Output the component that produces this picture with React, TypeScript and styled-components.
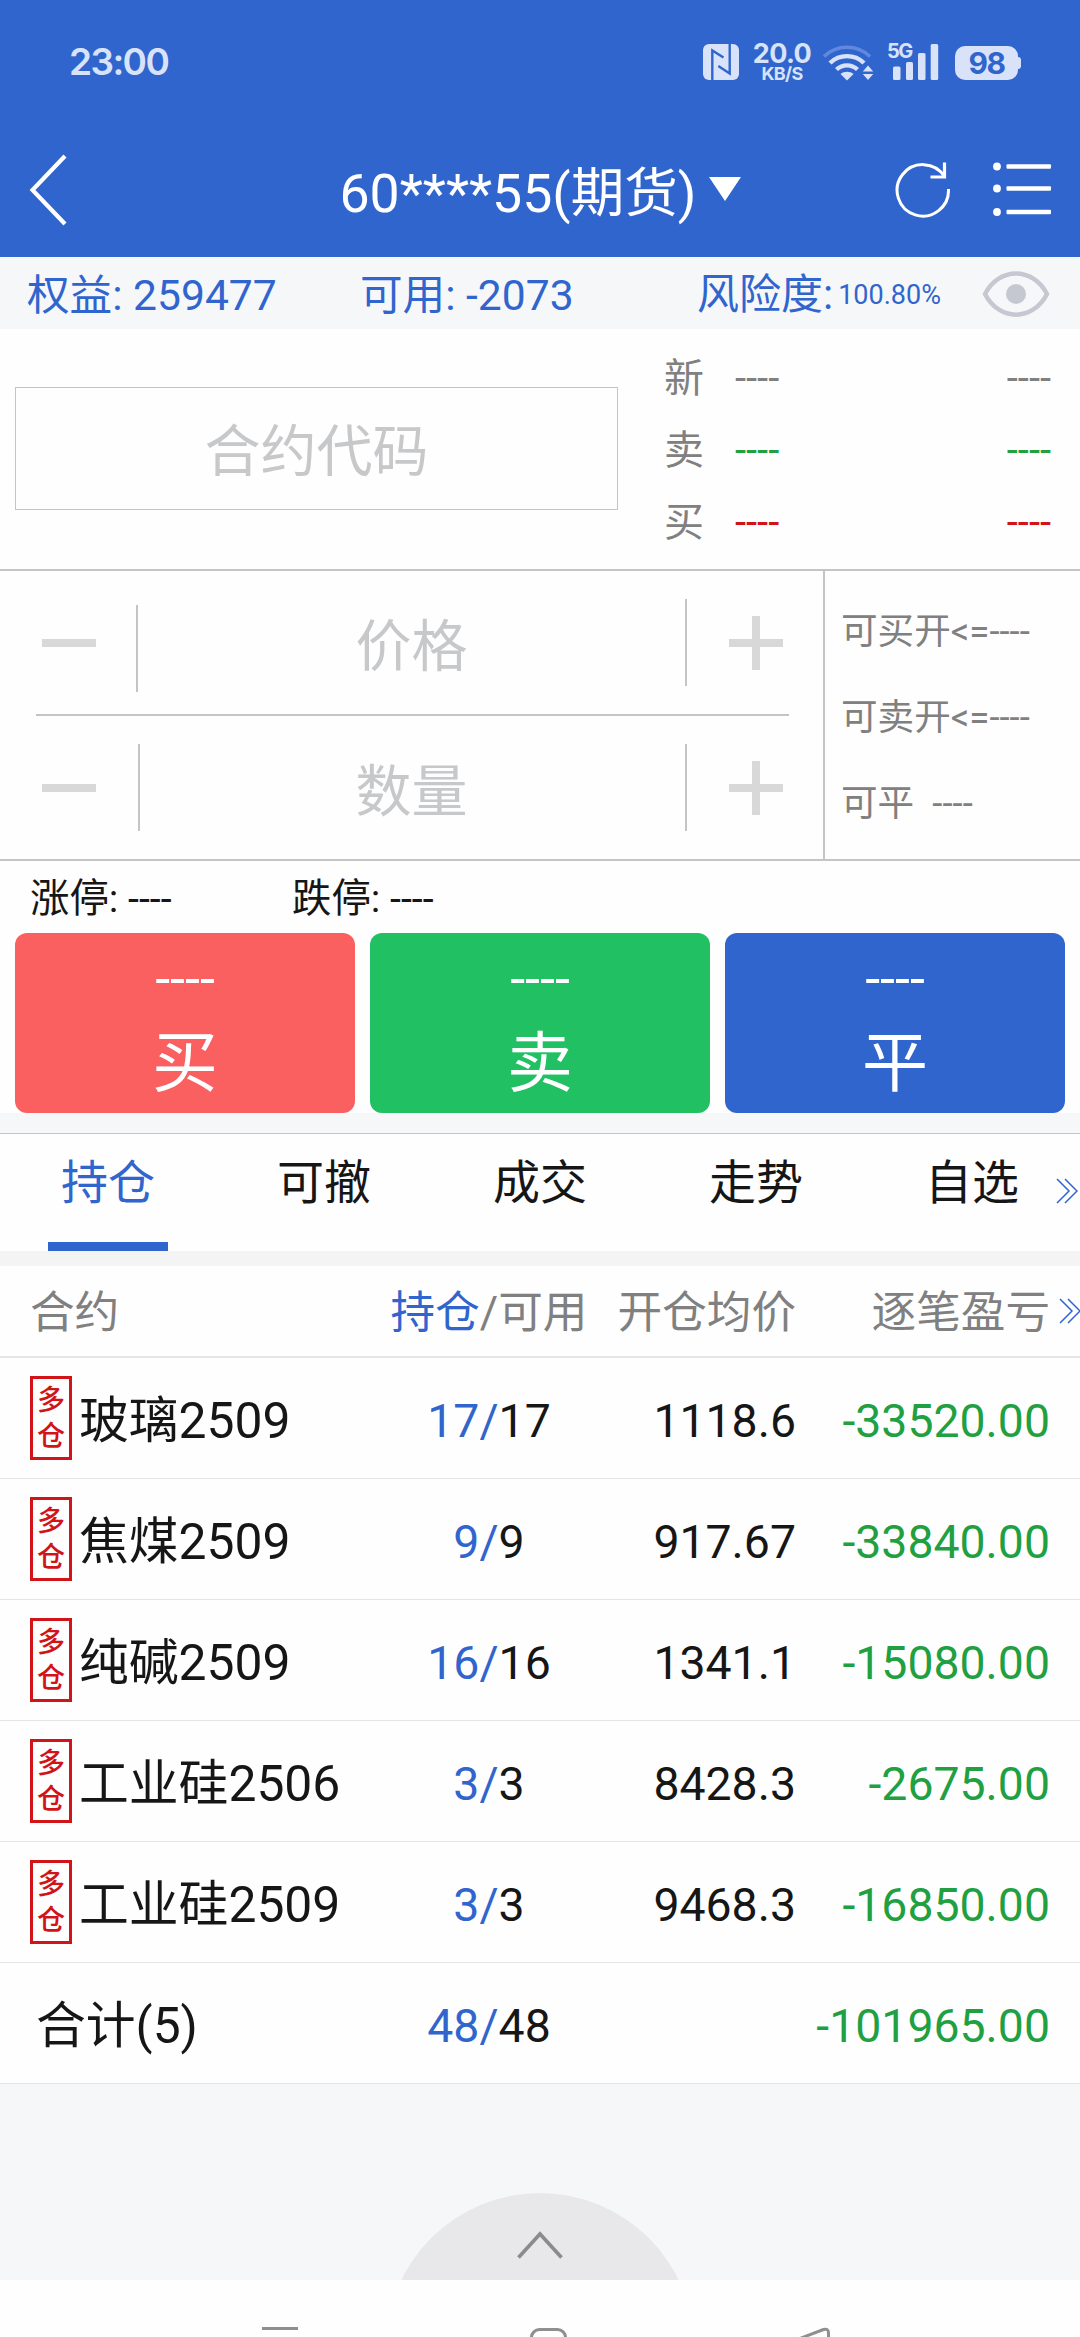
import React from 'react';
import styled, { createGlobalStyle } from 'styled-components';

const BLUE = '#3165ce';
const GREEN = '#21a042';
const RED = '#d01418';
const GRAY = '#808080';
const LINE = '#c3c4c6';
const STATUS = '#d8e3f9';

const Global = createGlobalStyle`
  *, *::before, *::after { box-sizing: border-box; }
  body {
    margin: 0;
    background: #fefefe;
    font-family: Roboto, "Noto Sans CJK SC", sans-serif;
    color: #161616;
  }
`;

const Screen = styled.main`
  width: 1080px;
  height: 2337px;
  display: flex;
  flex-direction: column;
  overflow: hidden;
  background: #fefefe;
`;

/* ---------- header ---------- */

const Header = styled.header`
  height: 257px;
  background: ${BLUE};
  flex: none;
`;

const StatusBar = styled.div`
  height: 127px;
  padding: 40px 59px 0 69px;
  display: flex;
  justify-content: space-between;
  align-items: flex-start;
  color: ${STATUS};
  font-family: Inter, sans-serif;
`;

const Clock = styled.span`
  font-size: 37px;
  font-weight: 600;
  line-height: 44px;
  letter-spacing: -1.6px;
`;

const StatusIcons = styled.div`
  display: flex;
  align-items: flex-start;
  padding-top: 3px;
`;

const Speed = styled.div`
  width: 60px;
  height: 44px;
  margin: -3px 10px 0 12px;
  display: flex;
  flex-direction: column;
  align-items: center;
  font-weight: 700;
  letter-spacing: -0.6px;
`;

const SpeedValue = styled.span`
  font-size: 27px;
  line-height: 27px;
`;

const SpeedUnit = styled.span`
  font-size: 18px;
  line-height: 13px;
`;

const Signal = styled.div`
  width: 52px;
  height: 38px;
  margin: 0 16px 0 13px;
  position: relative;
`;

const Generation = styled.span`
  position: absolute;
  left: 0;
  top: 0;
  font-size: 20px;
  font-weight: 700;
  line-height: 17px;
  letter-spacing: -1.6px;
`;

const Battery = styled.div`
  width: 63px;
  height: 34px;
  margin-top: 3px;
  border-radius: 10px;
  background: ${STATUS};
  color: ${BLUE};
  font-size: 30px;
  font-weight: 700;
  line-height: 34px;
  letter-spacing: -1.4px;
  text-align: center;
`;

const BatteryTip = styled.span`
  width: 3px;
  height: 12px;
  margin-top: 14px;
  border-radius: 0 3px 3px 0;
  background: ${STATUS};
`;

const NavBar = styled.div`
  height: 130px;
  display: grid;
  grid-template-columns: 339.5px 1fr 185px 101px;
  align-items: center;
  color: #fff;
`;

const Title = styled.h1`
  margin: 0;
  padding-top: 4px;
  display: flex;
  align-items: center;
  gap: 12px;
  font-size: 53.6px;
  font-weight: 400;
  line-height: 64px;
  white-space: nowrap;
`;

/* ---------- account summary ---------- */

const Account = styled.section`
  height: 72px;
  padding: 3px 0 0 27px;
  display: grid;
  grid-template-columns: 333px 337px 285px 68px;
  align-items: center;
  background: #f6f7f9;
  color: ${BLUE};
  font-size: 42.6px;
  line-height: 60px;
  white-space: nowrap;
`;

const Risk = styled.span`
  display: flex;
  align-items: center;
  gap: 5px;
  font-size: 42px;
`;

const Percent = styled.span`
  font-size: 27px;
`;

/* ---------- quote ---------- */

const Quote = styled.section`
  height: 242px;
  padding: 0 29px 0 15px;
  display: grid;
  grid-template-columns: 603px 1fr;
  column-gap: 46px;
  border-bottom: 2px solid ${LINE};
`;

const CodeBox = styled.div`
  height: 123px;
  margin-top: 58px;
  border: 1.5px solid ${LINE};
  display: flex;
  align-items: center;
  justify-content: center;
  color: #c7c8ca;
  font-size: 56px;
  line-height: 110px;
  padding-top: 6px;
`;

const QuoteRows = styled.div`
  padding-top: 14px;
`;

const QuoteRow = styled.div<{ $color: string }>`
  height: 72px;
  display: grid;
  grid-template-columns: 71px 1fr auto;
  font-size: 40px;
  line-height: 72px;
  color: ${(p) => p.$color};
`;

const QuoteLabel = styled.span`
  color: ${GRAY};
`;

/* ---------- order entry ---------- */

const Entry = styled.section`
  height: 290px;
  display: grid;
  grid-template-columns: 825px 1fr;
  border-bottom: 2px solid ${LINE};
`;

const Steppers = styled.div`
  padding-left: 36px;
  padding-right: 34px;
  border-right: 2px solid ${LINE};
`;

const Stepper = styled.div<{ $left: number }>`
  height: 143px;
  display: grid;
  grid-template-columns: ${(p) => p.$left}px 2px 1fr 2px 102px;
  align-items: center;
`;

const StepperRule = styled.div`
  height: 2px;
  background: ${LINE};
`;

const Divider = styled.span<{ $shift: number }>`
  height: 87px;
  background: ${LINE};
  margin-top: ${(p) => p.$shift}px;
`;

const StepField = styled.span<{ $nudge: number }>`
  text-align: center;
  color: #c7c8ca;
  font-size: 56px;
  line-height: 100px;
  padding-top: 8px;
  padding-right: ${(p) => p.$nudge}px;
`;

const StepButton = styled.button<{ $pad: number }>`
  border: 0;
  background: none;
  padding: 0 0 0 ${(p) => p.$pad}px;
  display: flex;
`;

const Limits = styled.div`
  padding: 18px 0 0 16px;
  color: ${GRAY};
  font-size: 36.6px;
  line-height: 86px;
  white-space: pre;
`;

const PriceLimits = styled.div`
  height: 72px;
  padding: 0 0 0 30px;
  display: grid;
  grid-template-columns: 262px 1fr;
  font-size: 39.4px;
  line-height: 76px;
`;

const Actions = styled.div`
  height: 180px;
  padding: 0 15px;
  display: grid;
  grid-template-columns: repeat(3, 1fr);
  gap: 15px;
`;

const Action = styled.button<{ $bg: string }>`
  border: 0;
  padding: 6px 0 0;
  border-radius: 12px;
  background: ${(p) => p.$bg};
  color: #fff;
  font-family: inherit;
  display: flex;
  flex-direction: column;
  align-items: center;
`;

const ActionPrice = styled.span`
  font-size: 54px;
  line-height: 80px;
`;

const ActionLabel = styled.span`
  font-size: 66px;
  line-height: 90px;
`;

const Gap = styled.div<{ $h: number; $bg: string }>`
  height: ${(p) => p.$h}px;
  background: ${(p) => p.$bg};
`;

/* ---------- tabs ---------- */

const Tabs = styled.nav`
  position: relative;
  height: 118px;
  border-top: 1px solid ${LINE};
  display: grid;
  grid-template-columns: repeat(5, 1fr);
`;

const Tab = styled.a<{ $active?: boolean }>`
  display: flex;
  flex-direction: column;
  align-items: center;
  justify-content: space-between;
  font-size: 47px;
  line-height: 98px;
  color: ${(p) => (p.$active ? BLUE : '#161616')};
  &::after {
    content: '';
    width: 120px;
    height: 9px;
    background: ${(p) => (p.$active ? BLUE : 'transparent')};
  }
`;

const More = styled.span<{ $top: number; $right: number }>`
  position: absolute;
  top: ${(p) => p.$top}px;
  right: ${(p) => p.$right}px;
  display: flex;
`;

/* ---------- positions table ---------- */

const columns = '359px 200px 207px 254px';

const TableHead = styled.div`
  position: relative;
  height: 92px;
  padding: 0 30px;
  border-bottom: 2px solid #e3e5e6;
  display: grid;
  grid-template-columns: ${columns};
  color: ${GRAY};
  font-size: 44.6px;
  line-height: 95px;
  white-space: nowrap;
`;

const Row = styled.div`
  height: 121px;
  padding: 0 30px;
  border-bottom: 1px solid #e3e5e6;
  display: grid;
  grid-template-columns: ${columns};
  align-items: center;
  font-size: 46.4px;
  line-height: 114px;
`;

const Cell = styled.span<{ $align?: string; $color?: string }>`
  padding-top: 5px;
  text-align: ${(p) => p.$align || 'left'};
  color: ${(p) => p.$color || 'inherit'};
`;

const HeadCell = styled(Cell)`
  padding-top: 0;
`;

const Blue = styled.span`
  color: ${BLUE};
`;

const Name = styled.span<{ $indent?: number }>`
  display: flex;
  align-items: center;
  gap: 7px;
  padding-left: ${(p) => p.$indent || 0}px;
  font-size: 49.8px;
  white-space: nowrap;
`;

const Label = styled.span`
  padding-top: 6px;
`;

const Tag = styled.span`
  width: 42px;
  height: 84px;
  border: 3px solid ${RED};
  padding: 4px 0 0;
  display: flex;
  flex-direction: column;
  align-items: center;
  color: ${RED};
  font-size: 28px;
  font-weight: 500;
  line-height: 36px;
`;

/* ---------- bottom ---------- */

const Bottom = styled.footer`
  height: 196px;
  background: #f6f7f9;
  display: flex;
  justify-content: center;
  align-items: flex-end;
`;

const SystemNav = styled.div`
  height: 57px;
  display: flex;
  align-items: flex-end;
  padding-left: 262px;
`;

const Drawing = styled.svg<{ $left?: number; $top?: number }>`
  display: block;
  flex: none;
  margin-left: ${(p) => p.$left || 0}px;
  margin-top: ${(p) => p.$top || 0}px;
`;

const MinusIcon = () => (
  <Drawing width="54" height="8"><rect width="54" height="8" fill="#d8d8d8" /></Drawing>
);

const PlusIcon = () => (
  <Drawing width="54" height="54">
    <path d="M0 23h23V0h8v23h23v8H31v23h-8V31H0z" fill="#d8d8d8" />
  </Drawing>
);

const MoreIcon = () => (
  <Drawing width="22" height="26" fill="none" stroke={BLUE} strokeWidth="1.5">
    <path d="M1 1l12 12L1 25M9 1l12 12L9 25" />
  </Drawing>
);

const NfcIcon = () => (
  <Drawing width="37" height="37" viewBox="0 0 37 37" $top={1}>
    <rect width="36" height="36" rx="6" fill={STATUS} />
    <g fill="none" stroke={BLUE} strokeWidth="2.400">
      <path d="M9.300 37V6.500L20.500 13.500" />
      <path d="M26.700 0v29.500L15.300 22" />
    </g>
  </Drawing>
);

const WifiIcon = () => (
  <Drawing width="52" height="38" viewBox="0 0 52 38">
    <g fill="none" stroke={STATUS} strokeWidth="4.400">
      <path d="M2 13.500a33 33 0 0 1 46 0" stroke="#5f88de" strokeWidth="3.500" />
      <path d="M8 20a24.500 24.500 0 0 1 34 0" />
      <path d="M14.500 26.500a15.500 15.500 0 0 1 21 0" />
    </g>
    <path d="M18.500 31c3.500-3 9.500-3 13 0L25 37.500z" fill={STATUS} />
    <path d="M46 22.500l5.200 6H40.800zM40.800 31h10.400L46 37z" fill={STATUS} />
  </Drawing>
);

const BarsIcon = () => (
  <Drawing width="52" height="38" viewBox="0 0 52 38" fill={STATUS}>
    <rect x="6" y="23.500" width="7.500" height="13.500" rx="1.500" />
    <rect x="19" y="19" width="7" height="18" rx="1.500" />
    <rect x="31" y="10" width="7.500" height="27" rx="1.500" />
    <rect x="43.700" y="1" width="7.500" height="36" rx="1.500" />
  </Drawing>
);

const BackIcon = () => (
  <Drawing width="38" height="72" $left={29} $top={-5} fill="none" stroke="#fff" strokeWidth="4.200">
    <path d="M36 2L3.500 36 36 70" />
  </Drawing>
);

const CaretIcon = () => (
  <Drawing width="32" height="24" $top={-11}><path d="M0 0h32L16 24z" fill="#fff" /></Drawing>
);

const RefreshIcon = () => (
  <Drawing width="58" height="60" $left={101} $top={-5} fill="none" stroke="#fff" strokeWidth="3">
    <path d="M53.500 29A25.700 25.700 0 1 1 49.500 16.500" />
    <path d="M49.500 2.500V17H35.500" strokeWidth="3.200" />
  </Drawing>
);

const ListIcon = () => (
  <Drawing width="60" height="56" $left={14} $top={-5} fill="#fff">
    {[4.5, 26.5, 50].map((y) => (
      <g key={y}>
        <circle cx="4" cy={y} r="3.900" />
        <rect x="13.500" y={y - 2.3} width="44.500" height="4.600" rx="1" />
      </g>
    ))}
  </Drawing>
);

const EyeIcon = () => (
  <Drawing width="68" height="48" viewBox="0 0 68 48" $top={-2}>
    <path d="M3 24C17-3.500 51-3.500 65 24 51 51.500 17 51.500 3 24z" fill="none" stroke="#c6c8d1" strokeWidth="4.500" strokeLinejoin="round" />
    <circle cx="34" cy="24" r="10" fill="#c6c8d1" />
  </Drawing>
);

const DomeIcon = () => (
  <Drawing width="278" height="87">
    <circle cx="139" cy="154" r="154" fill="#e8e8ea" />
    <path d="M117.500 64.500L139 41l21.500 23.500" fill="none" stroke="#8b8b8d" strokeWidth="3.600" />
  </Drawing>
);

const SystemIcons = () => (
  <Drawing width="580" height="12" fill="none" stroke="#8f8f8f" strokeWidth="3">
    <path d="M0 3.500h36" />
    <rect x="269.500" y="4.500" width="34" height="34" rx="8" />
    <path d="M534 15L561.500 4.500Q566.500 3 566.500 8v14" />
  </Drawing>
);

const positions = [
  { name: '玻璃2509', held: 17, free: 17, price: '1118.6', pnl: '-33520.00' },
  { name: '焦煤2509', held: 9, free: 9, price: '917.67', pnl: '-33840.00' },
  { name: '纯碱2509', held: 16, free: 16, price: '1341.1', pnl: '-15080.00' },
  { name: '工业硅2506', held: 3, free: 3, price: '8428.3', pnl: '-2675.00' },
  { name: '工业硅2509', held: 3, free: 3, price: '9468.3', pnl: '-16850.00' },
];

const quotes = [
  { label: '新', color: GRAY },
  { label: '卖', color: GREEN },
  { label: '买', color: RED },
];

const actions = [
  { label: '买', bg: '#fb6061' },
  { label: '卖', bg: '#21c063' },
  { label: '平', bg: BLUE },
];

const tabs = ['持仓', '可撤', '成交', '走势', '自选'];

export default function App() {
  return (
    <Screen>
      <Global />
      <Header>
        <StatusBar>
          <Clock>23:00</Clock>
          <StatusIcons>
            <NfcIcon />
            <Speed>
              <SpeedValue>20.0</SpeedValue>
              <SpeedUnit>KB/S</SpeedUnit>
            </Speed>
            <WifiIcon />
            <Signal>
              <BarsIcon />
              <Generation>5G</Generation>
            </Signal>
            <Battery>98</Battery>
            <BatteryTip />
          </StatusIcons>
        </StatusBar>
        <NavBar>
          <BackIcon />
          <Title>
            60****55(期货)
            <CaretIcon />
          </Title>
          <RefreshIcon />
          <ListIcon />
        </NavBar>
      </Header>

      <Account>
        <span>权益: 259477</span>
        <span>可用: -2073</span>
        <Risk>
          风险度:
          <Percent>100.80%</Percent>
        </Risk>
        <EyeIcon />
      </Account>

      <Quote>
        <CodeBox>合约代码</CodeBox>
        <QuoteRows>
          {quotes.map((q) => (
            <QuoteRow key={q.label} $color={q.color}>
              <QuoteLabel>{q.label}</QuoteLabel>
              <span>----</span>
              <span>----</span>
            </QuoteRow>
          ))}
        </QuoteRows>
      </Quote>

      <Entry>
        <Steppers>
          <Stepper $left={100}>
            <StepButton $pad={6}><MinusIcon /></StepButton>
            <Divider $shift={11} />
            <StepField $nudge={0}>价格</StepField>
            <Divider $shift={0} />
            <StepButton $pad={42}><PlusIcon /></StepButton>
          </Stepper>
          <StepperRule />
          <Stepper $left={102}>
            <StepButton $pad={6}><MinusIcon /></StepButton>
            <Divider $shift={0} />
            <StepField $nudge={2}>数量</StepField>
            <Divider $shift={0} />
            <StepButton $pad={42}><PlusIcon /></StepButton>
          </Stepper>
        </Steppers>
        <Limits>
          <div>可买开&lt;=----</div>
          <div>可卖开&lt;=----</div>
          <div>{'可平  ----'}</div>
        </Limits>
      </Entry>

      <PriceLimits>
        <span>涨停: ----</span>
        <span>跌停: ----</span>
      </PriceLimits>
      <Actions>
        {actions.map((a) => (
          <Action key={a.label} $bg={a.bg}>
            <ActionPrice>----</ActionPrice>
            <ActionLabel>{a.label}</ActionLabel>
          </Action>
        ))}
      </Actions>
      <Gap $h={20} $bg="#f6f7f9" />

      <Tabs>
        {tabs.map((t, i) => (
          <Tab key={t} $active={i === 0}>{t}</Tab>
        ))}
        <More $top={44} $right={2}><MoreIcon /></More>
      </Tabs>
      <Gap $h={15} $bg="#f4f4f4" />

      <TableHead>
        <HeadCell>合约</HeadCell>
        <HeadCell $align="center"><Blue>持仓</Blue>/可用</HeadCell>
        <HeadCell $align="right">开仓均价</HeadCell>
        <HeadCell $align="right">逐笔盈亏</HeadCell>
        <More $top={32} $right={-1}><MoreIcon /></More>
      </TableHead>
      {positions.map((p) => (
        <Row key={p.name}>
          <Name>
            <Tag><span>多</span><span>仓</span></Tag>
            <Label>{p.name}</Label>
          </Name>
          <Cell $align="center"><Blue>{p.held}/</Blue>{p.free}</Cell>
          <Cell $align="right">{p.price}</Cell>
          <Cell $align="right" $color={GREEN}>{p.pnl}</Cell>
        </Row>
      ))}
      <Row>
        <Name $indent={6}>
          <Label>合计(5)</Label>
        </Name>
        <Cell $align="center"><Blue>48/</Blue>48</Cell>
        <Cell />
        <Cell $align="right" $color={GREEN}>-101965.00</Cell>
      </Row>

      <Bottom>
        <DomeIcon />
      </Bottom>
      <SystemNav>
        <SystemIcons />
      </SystemNav>
    </Screen>
  );
}
